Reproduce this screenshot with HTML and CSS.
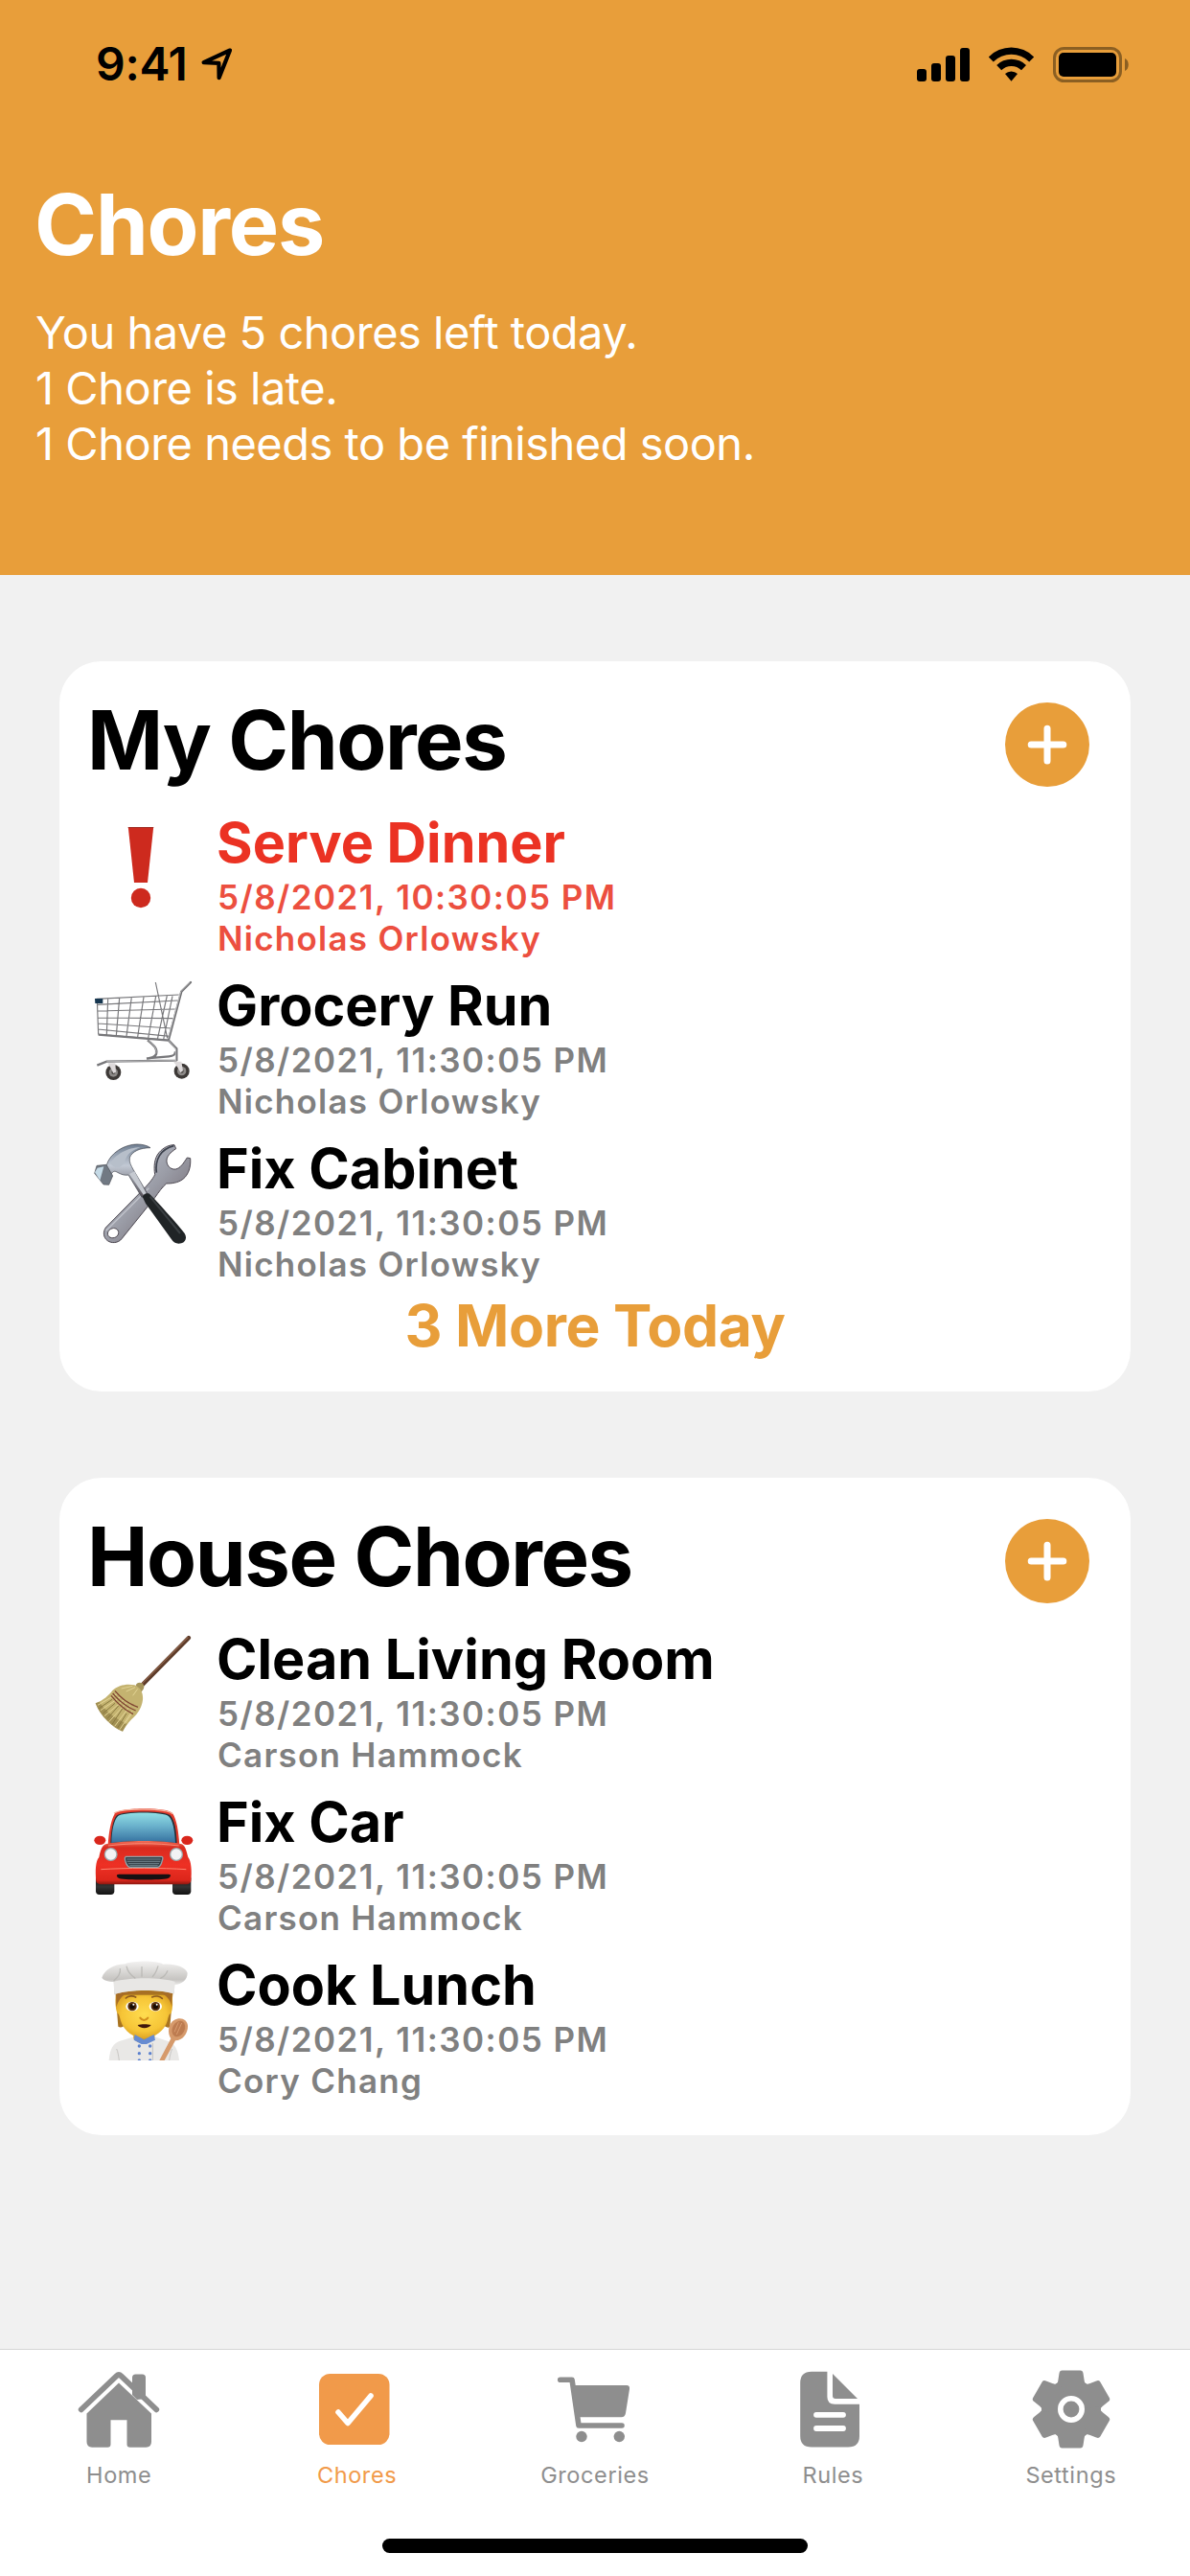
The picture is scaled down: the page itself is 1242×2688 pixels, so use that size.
FILE: index.html
```html
<!DOCTYPE html>
<html lang="en">
<head>
<meta charset="utf-8">
<title>Chores</title>
<link rel="stylesheet" href="styles.css">
</head>
<body>
<div class="screen">
  <header class="hero">
    <div class="status">
      <span class="clock">9:41</span>
      <svg class="location" viewBox="207 46 40 42"><path d="M240 52.5 212.6 65.200l15.800.600.200 15.400Z"/></svg>
      <svg class="system" viewBox="950 44 235 46">
        <rect x="957" y="72" width="10" height="13" rx="3"/>
        <rect x="972" y="66" width="10" height="19" rx="3"/>
        <rect x="987" y="58" width="10" height="27" rx="3"/>
        <rect x="1002" y="50" width="10" height="35" rx="3"/>
        <path d="M1031.8 59.4a33.4 33.4 0 0 1 47.4 0l-5 5a26.700 26.700 0 0 0-37.400 0Z"/>
        <path d="M1040.200 68a21.800 21.800 0 0 1 30.800 0l-5 5.200a14.800 14.800 0 0 0-20.800 0Z"/>
        <path d="M1049 77a9.600 9.600 0 0 1 13 0l-6.500 7.800Z"/>
        <g class="battery-shell"><rect x="1100.500" y="50.500" width="69" height="34" rx="10"/></g>
        <path class="battery-cap" d="M1174 61c5 2 5 11 0 13Z"/>
        <rect x="1105" y="55" width="60" height="25" rx="5"/>
      </svg>
    </div>
    <h1>Chores</h1>
    <p>You have 5 chores left today.<br>1 Chore is late.<br>1 Chore needs to be finished soon.</p>
  </header>

  <main class="content">
    <section class="card">
      <div class="card-head">
        <h2>My Chores</h2>
        <svg class="add" viewBox="0 0 88 88"><circle cx="44" cy="44" r="44"/><path d="M44 27.300v33.600M27.200 44.100h33.600"/></svg>
      </div>
      <ul class="chores">
        <li class="chore late">
          <svg class="emoji" viewBox="95 850 110 110"><path d="M133.800 863h26.400l-6.200 58h-14Z" fill="#cd2a1e"/><circle cx="147" cy="937" r="10.200" fill="#cd2a1e"/><path d="M133.800 863.500h26.400" stroke="#a02a22"/></svg>
          <div><h3>Serve Dinner</h3><p class="due">5/8/2021, 10:30:05 PM</p><p>Nicholas Orlowsky</p></div>
        </li>
        <li class="chore">
          <svg class="emoji" viewBox="45 30 330 330" fill="none">
            <g stroke="#77777a" stroke-width="3.500">
              <path d="M62 97 320 84M64 115l252-13M65 135l243-6M66 156l235 2M66 174l231 15M66 192l226 22M68 208l218 18M64 100l4 108M98 97l-4 112M134 95l-10 117M172 92l-16 122M210 91l-19 125M248 89l-24 131M283 87l-30 136M247 45l37 175M300 88l-28 136"/>
            </g>
            <path d="M357 45 328 74 288 224" stroke="#6f6f72" stroke-width="7" stroke-linecap="round"/>
            <path d="M355 45 326 74 286 223" stroke="#c6c6c8" stroke-width="2.500"/>
            <path d="M68 209 288 227M288 227l25 26v38M222 226c22 18 32 28 27 44-3 8-14 12-30 14M309 262c0 12-8 14-20 15l-70 6M64 305l30-12 220-3" stroke="#77777a" stroke-width="7"/>
            <path d="M224 226c20 18 28 28 24 42M288 227l22 26v36M94 293l218-3" stroke="#d0d0d2" stroke-width="2"/>
            <path d="M57 96h25v15H58Z" fill="#173750"/>
            <g><circle cx="115" cy="327" r="24" fill="#3d3937"/><circle cx="115" cy="327" r="14" fill="#8d8a88"/><circle cx="115" cy="327" r="6" fill="#4a4644"/><path d="M97 298h24l2 28-8 4-7-14Z" fill="#dedadb"/></g>
            <g><circle cx="329" cy="323" r="24" fill="#3d3937"/><circle cx="329" cy="323" r="14" fill="#8d8a88"/><circle cx="329" cy="323" r="6" fill="#4a4644"/><path d="M303 293h25l5 29-8 6-8-15Z" fill="#dedadb"/></g>
          </svg>
          <div><h3>Grocery Run</h3><p class="due">5/8/2021, 11:30:05 PM</p><p>Nicholas Orlowsky</p></div>
        </li>
        <li class="chore">
          <svg class="emoji" viewBox="45 540 330 330">
            <defs>
              <linearGradient id="wrench" x1="0" y1="0" x2="1" y2="1"><stop offset="0" stop-color="#c9d0dc"/><stop offset=".5" stop-color="#9a9ca6"/><stop offset="1" stop-color="#65575f"/></linearGradient>
              <linearGradient id="head" x1="0" y1="0" x2="0" y2="1"><stop offset="0" stop-color="#6f7e91"/><stop offset=".4" stop-color="#c2c9d4"/><stop offset="1" stop-color="#555058"/></linearGradient>
            </defs>
            <path fill="url(#wrench)" stroke="#4c4750" stroke-width="3" d="M306 554 311 566C294 577 280 590 282 607c2 16 16 25 28 23 15-3 24-18 36-36l10 2c2 26-5 51-23 65-16 12-35 14-52 14-12 10-25 28-36 44L141 848c-11 14-32 15-44 6-14-10-15-28-6-41L205 697c17-17 33-35 40-50-4-25-2-51 13-69 15-17 31-24 48-24ZM103 820c-10 9-6 23 6 25 13 2 24-8 22-19-3-12-18-15-28-6Z" fill-rule="evenodd"/>
            <path d="M92 823 226 689" stroke="#d9dce3" stroke-width="4" opacity=".6"/>
            <path d="M304 557c-42 11-59 43-54 84" fill="none" stroke="#3c414c" stroke-width="5"/>
            <path fill="url(#head)" stroke="#3f434b" stroke-width="2" d="M94 617C104 580 150 552 189 552c17 0 32 4 42 11-33 0-58 12-65 31-2 16 5 25 11 37l45 76-18 11-42-70c-16 3-28-5-38-10-9-4-14 3-18 12l-14-12Z"/>
            <path d="M106 612c12-26 54-50 94-51-30 11-46 25-49 47-12 18-29 25-45 4Z" fill="#b7bfca"/>
            <path d="m165 645 16-8 37 68-9 5Z" fill="#c6cad1"/>
            <path d="M63 619 93 616l20 35-12 28-17-1-28-35Z" fill="#717983" stroke="#4b4e56" stroke-width="2"/><path d="m65 626 20-4-12 43-16-25Z" fill="#c5dae6"/>
            <path fill="#202426" d="M206 716c5-8 14-12 22-9 35 36 77 83 110 124 8 12 4 28-10 31-14 4-25-2-31-12L216 737Z"/><path d="m230 716 94 115" stroke="#3a3f42" stroke-width="6"/>
          </svg>
          <div><h3>Fix Cabinet</h3><p class="due">5/8/2021, 11:30:05 PM</p><p>Nicholas Orlowsky</p></div>
        </li>
      </ul>
      <p class="more">3 More Today</p>
    </section>

    <section class="card">
      <div class="card-head">
        <h2>House Chores</h2>
        <svg class="add" viewBox="0 0 88 88"><circle cx="44" cy="44" r="44"/><path d="M44 27.300v33.600M27.200 44.100h33.600"/></svg>
      </div>
      <ul class="chores">
        <li class="chore">
          <svg class="emoji" viewBox="45 36 330 330" fill="none">
            <path d="M351 57 203 207" stroke="#5c3a28" stroke-width="13" stroke-linecap="round"/><path d="M348 56 201 204" stroke="#8a6048" stroke-width="4" stroke-linecap="round"/>
            <path d="M185 207c2-12 20-13 25-2 3 9-1 16-9 22Z" fill="#a5955b"/>
            <path d="M59 262c25-9 42-25 53-40 18-17 45-22 69-17 19 7 28 25 26 46-3 26-18 47-35 61-11 11-21 26-28 38-34-14-69-47-85-88Z" fill="#c4b370"/>
            <path d="M144 350c-34-14-69-47-85-88l12-4c19 29 52 53 86 68Z" fill="#8f7d43" opacity=".65"/>
            <path d="m66 268 60-35M75 284l62-42M87 302l60-50M101 320l55-60M119 334l48-64M135 344l39-58M151 326l20-29M140 216l35-8M155 225l28-13M176 238l15-21" stroke="#e2d394" stroke-width="3"/>
            <path d="m70 278 41-28M82 294l38-32M96 310l35-40M111 328l32-49M128 339l28-45" stroke="#88783f" stroke-width="3"/>
            <path d="M120 223c19 23 46 42 72 51M113 231c20 24 46 44 72 54M108 238c21 26 44 46 69 58" stroke="#7e4230" stroke-width="4"/>
          </svg>
          <div><h3>Clean Living Room</h3><p class="due">5/8/2021, 11:30:05 PM</p><p>Carson Hammock</p></div>
        </li>
        <li class="chore">
          <svg class="emoji" viewBox="45 546 330 330">
            <defs>
              <linearGradient id="glass" x1="0" y1="0" x2="0" y2="1"><stop stop-color="#91dfe5"/><stop offset=".45" stop-color="#69b0cb"/><stop offset="1" stop-color="#34709f"/></linearGradient>
              <linearGradient id="paint" x1="0" y1="0" x2="0" y2="1"><stop stop-color="#f0705a"/><stop offset=".15" stop-color="#d92b1f"/><stop offset=".55" stop-color="#ee3024"/><stop offset=".9" stop-color="#dc261b"/><stop offset="1" stop-color="#8a1710"/></linearGradient>
              <linearGradient id="tyre" x1="0" y1="0" x2="0" y2="1"><stop stop-color="#111"/><stop offset=".6" stop-color="#333"/><stop offset="1" stop-color="#111"/></linearGradient>
            </defs>
            <rect x="60" y="800" width="58" height="61" rx="11" fill="url(#tyre)"/><rect x="300" y="800" width="58" height="61" rx="11" fill="url(#tyre)"/>
            <path d="M98 705c3-37 8-75 21-97 12-21 167-22 181-2 14 20 19 60 22 99Z" fill="#e23a2b"/>
            <path d="M117 607c20-17 165-17 183 1" fill="none" stroke="#f5b19c" stroke-width="4"/>
            <path d="M106 700c2-39 7-73 20-87 15-15 153-16 167 0 15 16 19 48 21 87Z" fill="#25313a"/>
            <path d="M109 699c1-41 8-71 20-83 17-15 142-15 159 0 13 12 19 42 21 83-65-8-140-8-200 0Z" fill="url(#glass)"/>
            <ellipse cx="73" cy="691" rx="18" ry="14" fill="#d9261c"/><ellipse cx="346" cy="691" rx="18" ry="14" fill="#d9261c"/>
            <path d="M91 703c65-13 174-13 238 0 12 5 15 23 20 41 10 12 12 43 9 74-2 9-10 11-20 11H82c-12 0-20-3-21-11-3-31-2-62 9-74 4-18 8-36 21-41Z" fill="url(#paint)"/>
            <path d="M99 708c71-9 148-9 221 0M76 782c80-5 191-5 267 0" fill="none" stroke="#ff9a83" stroke-width="2.500"/>
            <circle cx="107" cy="735" r="21" fill="#9cacb0"/><circle cx="107" cy="735" r="17" fill="#f3f3f5"/><circle cx="312" cy="735" r="21" fill="#9cacb0"/><circle cx="312" cy="735" r="17" fill="#f3f3f5"/>
            <path d="M154 742h112c5 0 4 7 2 12-3 13-7 21-15 21H167c-9 0-17-20-16-29Z" fill="#344048" stroke="#8fa3aa" stroke-width="4"/>
            <path d="M157 750h106M158 757h104M162 764h96M166 770h88" stroke="#7d929a" stroke-width="2.500"/>
            <path d="M133 797h154c12 0 7 10-3 14-17 5-130 5-149 0-10-4-14-14-2-14Z" fill="#161012"/>
          </svg>
          <div><h3>Fix Car</h3><p class="due">5/8/2021, 11:30:05 PM</p><p>Carson Hammock</p></div>
        </li>
        <li class="chore">
          <svg class="emoji" viewBox="45 1056 330 330">
            <defs>
              <linearGradient id="hat" x1="0" y1="0" x2="0" y2="1"><stop stop-color="#f2f1f0"/><stop offset=".55" stop-color="#c6c4c1"/><stop offset=".7" stop-color="#e9e8e6"/><stop offset="1" stop-color="#c9c7c4"/></linearGradient>
              <radialGradient id="face" cx=".5" cy=".45" r=".6"><stop stop-color="#ffdc4f"/><stop offset=".65" stop-color="#f6c537"/><stop offset="1" stop-color="#d79a1f"/></radialGradient>
            </defs>
            <path d="M121 1160h181l-10 116c-9 3-18-2-22-9H154c-7 9-17 12-24 7Z" fill="#a97420"/>
            <path d="M101 1380c3-36 13-54 35-61l44-13h64l40 13c24 8 33 26 37 61Z" fill="#e9e8e6"/>
            <path d="M133 1380c-2-15-4-28-8-36M290 1380c2-15 5-28 9-36" stroke="#c8c6c3" stroke-width="3" fill="none"/>
            <path d="M178 1280h66v28c-14 24-48 26-66 4Z" fill="#d49b20"/>
            <path d="M123 1175h175c4 20 3 42-2 58-6 0-8 7-12 23-8 31-43 55-73 55s-64-23-73-55c-4-15-5-22-11-24-5-14-7-38-4-57Z" fill="url(#face)"/>
            <path d="M124 1166h174v45c-5-21-16-34-37-44-39 4-90 4-111 7-13 9-20 21-26 39Z" fill="#a66c27"/>
            <path d="M154 1185c8-8 23-8 31-3M236 1182c10-5 24-4 32 4" stroke="#8c5920" stroke-width="5" fill="none" stroke-linecap="round"/>
            <ellipse cx="174" cy="1211" rx="20" ry="15" fill="#fff"/><circle cx="174" cy="1211" r="14" fill="#5b3210"/><circle cx="174" cy="1211" r="8" fill="#180b04"/><circle cx="178" cy="1205" r="3" fill="#fff"/>
            <ellipse cx="247" cy="1211" rx="20" ry="15" fill="#fff"/><circle cx="247" cy="1211" r="14" fill="#5b3210"/><circle cx="247" cy="1211" r="8" fill="#180b04"/><circle cx="251" cy="1205" r="3" fill="#fff"/>
            <path d="M199 1247c6 9 18 9 24 0" stroke="#d38e1c" stroke-width="6" fill="none" stroke-linecap="round"/>
            <path d="M191 1269c12-3 30-3 42 0-6 12-35 13-42 0Z" fill="#40170c"/>
            <path d="m182 1299 29 16 31-16 4 17-27 13h-16l-24-13Z" fill="#668bd1"/>
            <path d="M238 1326v54" stroke="#c3c2c0" stroke-width="3"/>
            <g fill="#5c81ce"><circle cx="196" cy="1335" r="5"/><circle cx="230" cy="1335" r="5"/><circle cx="196" cy="1358" r="5"/><circle cx="230" cy="1358" r="5"/><path d="M191 1380a5 5 0 0 1 10 0ZM225 1380a5 5 0 0 1 10 0Z"/></g>
            <path d="m259 1380 36-68c-12-19-8-47 10-58 20-12 42-2 43 18 1 25-19 47-39 46l-34 62Z" fill="#d69a6b"/>
            <ellipse cx="319" cy="1281" rx="19" ry="26" transform="rotate(28 319 1281)" fill="#bd7c50"/><path d="m313 1299 16-36M306 1291l13-30" stroke="#d99c70" stroke-width="3"/>
            <path d="M79 1121c8-23 34-42 73-43 26-10 97-12 119 1 40-2 71 10 76 27 0 22-18 35-40 37l-2 28c-49-15-140-15-187 3l-2-40c-20-1-32-5-37-13Z" fill="url(#hat)"/>
            <path d="M116 1134c50-15 148-15 192 0l-3 37c-49-14-138-14-187 2Z" fill="#e8e7e5"/>
            <path d="M156 1085c3 15 12 28 28 38M136 1092c3 17-8 28-20 39M204 1086v32M255 1084c-4 14-8 25-18 34M285 1099c-6 15-13 20-23 24" stroke="#b3b1ad" stroke-width="4" fill="none" opacity=".75"/>
          </svg>
          <div><h3>Cook Lunch</h3><p class="due">5/8/2021, 11:30:05 PM</p><p>Cory Chang</p></div>
        </li>
      </ul>
    </section>
  </main>

  <nav class="tabs">
    <div class="tab-row">
      <a class="tab">
        <svg viewBox="76 2460 96 100"><path d="M138 2499v-18q0-3.500 3.500-3.500h7q3.500 0 3.500 3.500v22l-9 1Z"/><path d="m84.700 2514.300 36.800-35q2.500-2.400 5 0l36.800 35" fill="none" stroke="currentColor" stroke-width="5.800" stroke-linecap="round"/><path d="m124 2486.500 34 32v29.500q0 5.700-5.700 5.700h-16.500q-3.300 0-3.300-3.300v-25.100h-17v25.100q0 3.300-3.300 3.300H96.200q-5.700 0-5.700-5.700v-29.500Z"/></svg>
        <span>Home</span>
      </a>
      <a class="tab active">
        <svg viewBox="324.500 2460 96 100"><rect x="332.500" y="2477" width="73.500" height="74" rx="11.500"/><path d="m352.500 2517 10 11.500 24-28.500" fill="none" stroke="#fff" stroke-width="5.600" stroke-linecap="round" stroke-linejoin="round"/></svg>
        <span>Chores</span>
      </a>
      <a class="tab">
        <svg viewBox="573 2460 96 100"><path d="M584.700 2483.200h12.300l7 47.800h45" fill="none" stroke="currentColor" stroke-width="5.600" stroke-linecap="round" stroke-linejoin="round"/><path d="M598 2489h56q3.500 0 3 4l-4 25q-.6 4.200-4.600 4.200H603Z"/><circle cx="607" cy="2542.500" r="5.700"/><circle cx="646.300" cy="2542.500" r="5.700"/></svg>
        <span>Groceries</span>
      </a>
      <a class="tab">
        <svg viewBox="821 2460 96 100"><path d="M847 2474.700h16.400V2501q0 7.700 7.700 7.700H897v33q0 11.800-11.800 11.800H847q-11.800 0-11.800-11.800v-55.200q0-11.800 11.800-11.800Z"/><path d="m869 2477 26 26h-23q-3 0-3-3Z"/><path d="M852 2519.800h28M852 2534h28" stroke="#fff" stroke-width="5.800" stroke-linecap="round"/></svg>
        <span>Rules</span>
      </a>
      <a class="tab">
        <svg viewBox="1069.800 2460 96 100">
          <defs><path id="tooth" d="M-9.500-40.500h19q2.600 0 3 3l1.400 9q.8 3.500 5 2L0 0l-18.900-26.500q4.200 1.500 5-2l1.400-9q.4-3 3-3Z"/></defs>
          <g transform="translate(1117.800 2514)"><circle r="31"/><use href="#tooth"/><use href="#tooth" transform="rotate(60)"/><use href="#tooth" transform="rotate(120)"/><use href="#tooth" transform="rotate(180)"/><use href="#tooth" transform="rotate(240)"/><use href="#tooth" transform="rotate(300)"/><circle r="11.200" fill="none" stroke="#fff" stroke-width="5.600"/></g>
        </svg>
        <span>Settings</span>
      </a>
    </div>
    <div class="home-bar"></div>
  </nav>
</div>
</body>
</html>
```
FILE: styles.css
```css
* { box-sizing: border-box; margin: 0; padding: 0; }

body { font-family: Inter, "Liberation Sans", sans-serif; background: #f1f1f1; color: #000; }
h1, h2, h3, p { white-space: nowrap; }
svg { display: block; flex: none; }

.screen { height: 2688px; display: flex; flex-direction: column; }

.hero { height: 600px; background: #e89e3a; color: #fff; padding: 0 37px; }
.status { display: flex; align-items: center; height: 134px; color: #000; padding-left: 63px; margin-bottom: 46px; }
.clock { font-size: 48px; line-height: 60px; font-weight: 600; width: 98px; letter-spacing: -0.300px; }
.location { width: 40px; height: 42px; margin-left: 9px; fill: none; stroke: #000; stroke-width: 4.200; stroke-linejoin: round; }
.system { width: 235px; height: 46px; margin-left: auto; margin-right: 20px; }
.battery-shell { fill: none; stroke: #000; stroke-width: 3; opacity: .4; }
.battery-cap { opacity: .4; }
.hero h1 { font-size: 88px; line-height: 108px; font-weight: 700; letter-spacing: -1.200px; margin: 0 0 30px -1px; }
.hero p { font-size: 47px; line-height: 58px; font-weight: 400; letter-spacing: -0.500px; }

.content { flex: 1; display: flex; flex-direction: column; gap: 90px; padding: 90px 62px 0; }
.card { background: #fff; border-radius: 44px; padding: 32px 30px 35px; }
.card-head { display: flex; align-items: flex-start; justify-content: space-between; height: 123px; }
.card-head h2 { font-size: 85px; line-height: 100px; font-weight: 700; letter-spacing: -1.400px; margin: 1px 0 0 -1px; }
.add { width: 88px; height: 88px; margin: 11px 13px 0 0; fill: #e89e3a; }
.add path { stroke: #fff; stroke-width: 7; stroke-linecap: round; }

.chores { list-style: none; display: flex; flex-direction: column; gap: 14px; }
.chore { display: flex; gap: 21px; height: 156px; padding-left: 3px; }
.emoji { width: 110px; height: 110px; margin-top: 5px; }
.chore h3 { font-size: 57.500px; line-height: 68px; font-weight: 700; margin: 0 0 2px; }
.chore p { font-size: 35px; line-height: 43px; font-weight: 600; letter-spacing: 1.250px; color: #808080; padding-left: 1px; }
.chore .due { letter-spacing: 1.450px; }
.chore.late h3 { color: #eb3223; }
.chore.late p { color: #ec4f3f; }
.more { margin-top: 9px; font-size: 60.500px; line-height: 67px; font-weight: 700; letter-spacing: -0.400px; text-align: center; color: #e89e3a; }

.tabs { height: 237px; background: #fff; border-top: 1px solid #d6d6d6; padding-top: 8px; }
.tab-row { display: grid; grid-template-columns: repeat(5, 1fr); }
.tab { display: flex; flex-direction: column; align-items: center; gap: 8px; color: #8e8e8e; font-size: 23.500px; line-height: 30px; letter-spacing: 0.600px; }
.tab svg { width: 96px; height: 100px; fill: currentColor; }
.tab.active { color: #f19a4a; }
.home-bar { width: 444px; height: 15px; border-radius: 8px; background: #000; margin: 51px auto 0; }
```
